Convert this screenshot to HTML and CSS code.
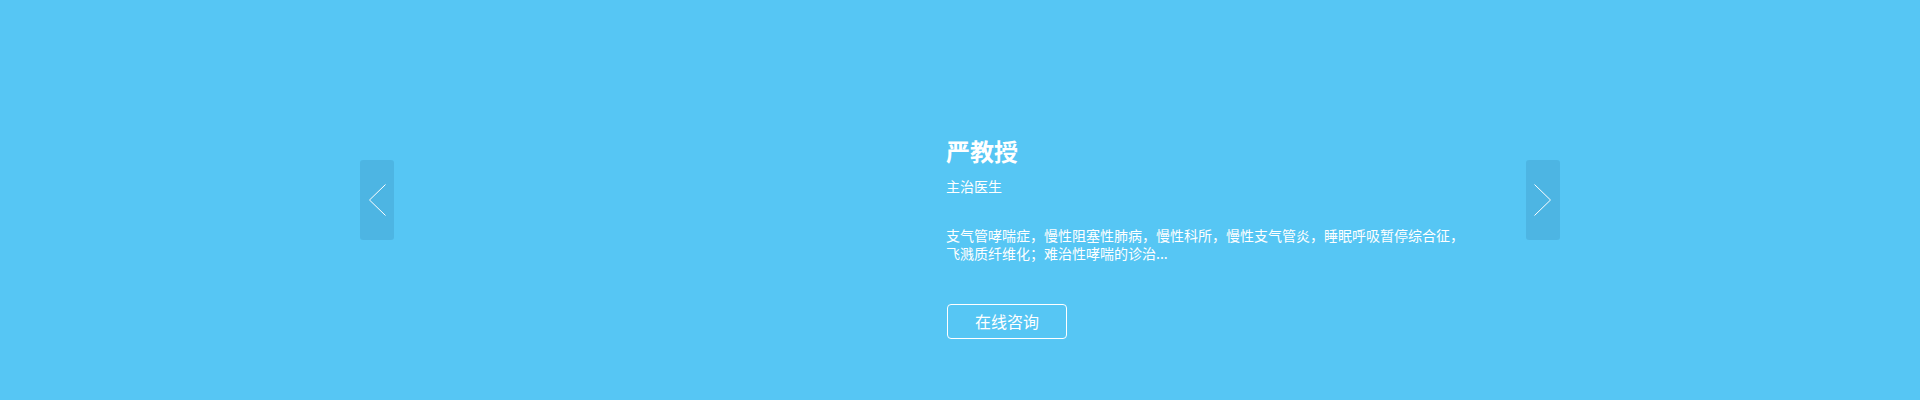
FILE: index.html
```html
<!DOCTYPE html>
<html lang="zh">
<head>
<meta charset="utf-8">
<title>专家介绍</title>
<link rel="stylesheet" href="styles.css">
</head>
<body>
<section class="banner">
  <div class="slider">
    <button class="arrow arrow-prev" aria-label="上一个">
      <svg width="34" height="80" viewBox="0 0 34 80"><polyline points="25.5,24.5 9.5,40 25.5,55.5" fill="none" stroke="#fff" stroke-width="1"/></svg>
    </button>
    <div class="slide">
      <div class="photo"></div>
      <div class="info">
        <h2 class="name">严教授</h2>
        <p class="title">主治医生</p>
        <p class="desc">支气管哮喘症，慢性阻塞性肺病，慢性科所，慢性支气管炎，睡眠呼吸暂停综合征，飞溅质纤维化；难治性哮喘的诊治...</p>
        <a class="consult" href="#">在线咨询</a>
      </div>
    </div>
    <button class="arrow arrow-next" aria-label="下一个">
      <svg width="34" height="80" viewBox="0 0 34 80"><polyline points="8.5,24.5 24.5,40 8.5,55.5" fill="none" stroke="#fff" stroke-width="1"/></svg>
    </button>
  </div>
</section>
</body>
</html>
```

FILE: styles.css
```css
* { box-sizing: border-box; }
html, body { margin: 0; padding: 0; }
body {
  font-family: "Noto Sans CJK SC", "Noto Sans", sans-serif;
  background: #56c6f4;
  color: #fff;
}
.banner {
  height: 400px;
  background: #56c6f4;
}
.slider {
  width: 1200px;
  height: 400px;
  margin: 0 auto;
  display: flex;
  align-items: center;
}
.arrow {
  width: 34px;
  height: 80px;
  padding: 0;
  border: 0;
  border-radius: 3px;
  background: rgba(0, 40, 80, 0.1);
  display: flex;
  cursor: pointer;
  flex: none;
}
.arrow svg { display: block; }
.slide {
  flex: 1;
  height: 400px;
  display: flex;
}
.photo {
  width: 552px;
  flex: none;
}
.info {
  padding-top: 139px;
  width: 540px;
}
.name {
  margin: 0;
  font-size: 24px;
  line-height: 24px;
  font-weight: bold;
}
.title {
  margin: 16px 0 0;
  font-size: 14px;
  line-height: 14px;
}
.desc {
  margin: 33px 0 0;
  width: 524px;
  font-size: 14px;
  line-height: 18px;
}
.consult {
  display: block;
  margin-top: 42px;
  margin-left: 1px;
  width: 120px;
  height: 35px;
  border: 1px solid #fff;
  border-radius: 4px;
  color: #fff;
  text-decoration: none;
  text-align: center;
  font-size: 16px;
  line-height: 33px;
}
```
